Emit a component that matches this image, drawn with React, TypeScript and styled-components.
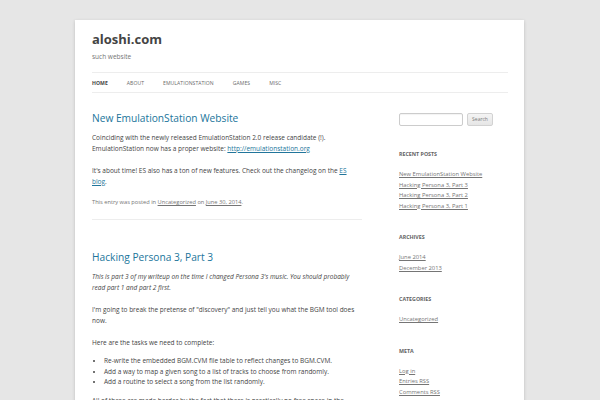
import React from 'react';
import styled, { createGlobalStyle } from 'styled-components';

const GlobalStyle = createGlobalStyle`
  html, body {
    margin: 0;
    padding: 0;
    background: #e6e6e6;
  }
  body {
    font-family: 'Open Sans', 'DejaVu Sans', sans-serif;
    color: #444;
    overflow: hidden;
  }
`;

const Page = styled.div`
  width: 449px;
  box-sizing: border-box;
  margin: 20px 0 0 75px;
  padding: 0 16px 0 17px;
  background: #fff;
  box-shadow: rgba(100, 100, 100, 0.3) 0 1px 3px;
  height: 400px;
`;

const Header = styled.header`
  padding-top: 11px;
`;

const SiteTitle = styled.h1`
  margin: 0;
  font-size: 13px;
  line-height: 16px;
  font-weight: 700;
  color: #444;
`;

const Tagline = styled.h2`
  margin: 5px 0 0;
  font-size: 6.5px;
  line-height: 10px;
  font-weight: 400;
  color: #757575;
`;

const Nav = styled.nav`
  margin-top: 10px;
  border-top: 1px solid #ededed;
  border-bottom: 1px solid #ededed;
  height: 19px;
  display: flex;
  align-items: center;
  gap: 19px;
`;

const NavItem = styled.span<{ $current?: boolean }>`
  font-size: 5.1px;
  letter-spacing: 0.05px;
  text-transform: uppercase;
  color: ${(p) => (p.$current ? '#444' : '#6a6a6a')};
  font-weight: ${(p) => (p.$current ? 700 : 400)};
`;

const Main = styled.div`
  display: flex;
  gap: 37px;
  padding-top: 18px;
`;

const Content = styled.div`
  width: 270px;
`;

const Article = styled.article`
  padding-bottom: 12px;
  margin-bottom: 30px;
  border-bottom: 1px solid #ededed;
`;

const EntryTitle = styled.h1`
  margin: 0 0 6px;
  font-size: 10.2px;
  line-height: 15px;
  font-weight: 400;
  color: #21759b;
`;

const Para = styled.p<{ $italic?: boolean }>`
  margin: 0 0 11px;
  font-size: 6.5px;
  line-height: 11px;
  color: #444;
  font-style: ${(p) => (p.$italic ? 'italic' : 'normal')};
`;

const Link = styled.a`
  color: #21759b;
  text-decoration: underline;
`;

const Meta = styled.footer`
  font-size: 5.7px;
  line-height: 9px;
  color: #757575;
  margin-top: 8px;

  a {
    color: #757575;
    text-decoration: underline;
  }
`;

const List = styled.ul`
  margin: -3px 0 7px;
  padding-left: 12px;
  font-size: 6.5px;
  line-height: 10.5px;
`;

const Sidebar = styled.aside`
  width: 109px;
  padding-top: 2px;
`;

const SearchRow = styled.div`
  display: flex;
  gap: 4px;
  margin-bottom: 24px;
`;

const SearchInput = styled.div`
  width: 62px;
  height: 11px;
  border: 1px solid #ccc;
  border-radius: 2px;
  background: #fff;
  box-shadow: inset 0 1px 1px rgba(0, 0, 0, 0.05);
`;

const SearchButton = styled.div`
  width: 26px;
  height: 13px;
  border-radius: 2px;
  background: linear-gradient(#f4f4f4, #e6e6e6);
  border: 1px solid #d2d2d2;
  box-sizing: border-box;
  font-size: 5px;
  line-height: 11px;
  text-align: center;
  color: #7c7c7c;
`;

const Widget = styled.section`
  margin-bottom: 22px;
`;

const WidgetTitle = styled.h3`
  margin: 0 0 10px;
  font-size: 5.3px;
  line-height: 9px;
  font-weight: 700;
  text-transform: uppercase;
  color: #636363;
`;

const WidgetList = styled.ul`
  margin: 0;
  padding: 0;
  list-style: none;
`;

const WidgetItem = styled.li`
  font-size: 5.8px;
  line-height: 10.5px;

  a {
    color: #757575;
    text-decoration: underline;
  }
`;

const widgets = [
  {
    title: 'Recent Posts',
    items: [
      'New EmulationStation Website',
      'Hacking Persona 3, Part 3',
      'Hacking Persona 3, Part 2',
      'Hacking Persona 3, Part 1',
    ],
  },
  { title: 'Archives', items: ['June 2014', 'December 2013'] },
  { title: 'Categories', items: ['Uncategorized'] },
  { title: 'Meta', items: ['Log in', 'Entries RSS', 'Comments RSS'] },
];

export default function App() {
  return (
    <>
      <GlobalStyle />
      <Page>
        <Header>
          <SiteTitle>aloshi.com</SiteTitle>
          <Tagline>such website</Tagline>
          <Nav>
            <NavItem $current>Home</NavItem>
            <NavItem>About</NavItem>
            <NavItem>EmulationStation</NavItem>
            <NavItem>Games</NavItem>
            <NavItem>Misc</NavItem>
          </Nav>
        </Header>
        <Main>
          <Content>
            <Article>
              <EntryTitle>New EmulationStation Website</EntryTitle>
              <Para>
                Coinciding with the newly released EmulationStation 2.0 release candidate (!).
                EmulationStation now has a proper website:{' '}
                <Link href="#">http://emulationstation.org</Link>
              </Para>
              <Para>
                It's about time! ES also has a ton of new features. Check out the changelog on the{' '}
                <Link href="#">ES blog</Link>.
              </Para>
              <Meta>
                This entry was posted in <a href="#">Uncategorized</a> on <a href="#">June 30, 2014</a>.
              </Meta>
            </Article>
            <article>
              <EntryTitle>Hacking Persona 3, Part 3</EntryTitle>
              <Para $italic>
                This is part 3 of my writeup on the time I changed Persona 3's music. You should probably
                read part 1 and part 2 first.
              </Para>
              <Para>
                I'm going to break the pretense of "discovery" and just tell you what the BGM tool does
                now.
              </Para>
              <Para>Here are the tasks we need to complete:</Para>
              <List>
                <li>Re-write the embedded BGM.CVM file table to reflect changes to BGM.CVM.</li>
                <li>Add a way to map a given song to a list of tracks to choose from randomly.</li>
                <li>Add a routine to select a song from the list randomly.</li>
              </List>
              <Para>
                All of these are made harder by the fact that there is practically no free space in the game.
              </Para>
            </article>
          </Content>
          <Sidebar>
            <SearchRow>
              <SearchInput />
              <SearchButton>Search</SearchButton>
            </SearchRow>
            {widgets.map((w) => (
              <Widget key={w.title}>
                <WidgetTitle>{w.title}</WidgetTitle>
                <WidgetList>
                  {w.items.map((item) => (
                    <WidgetItem key={item}>
                      <a href="#">{item}</a>
                    </WidgetItem>
                  ))}
                </WidgetList>
              </Widget>
            ))}
          </Sidebar>
        </Main>
      </Page>
    </>
  );
}
